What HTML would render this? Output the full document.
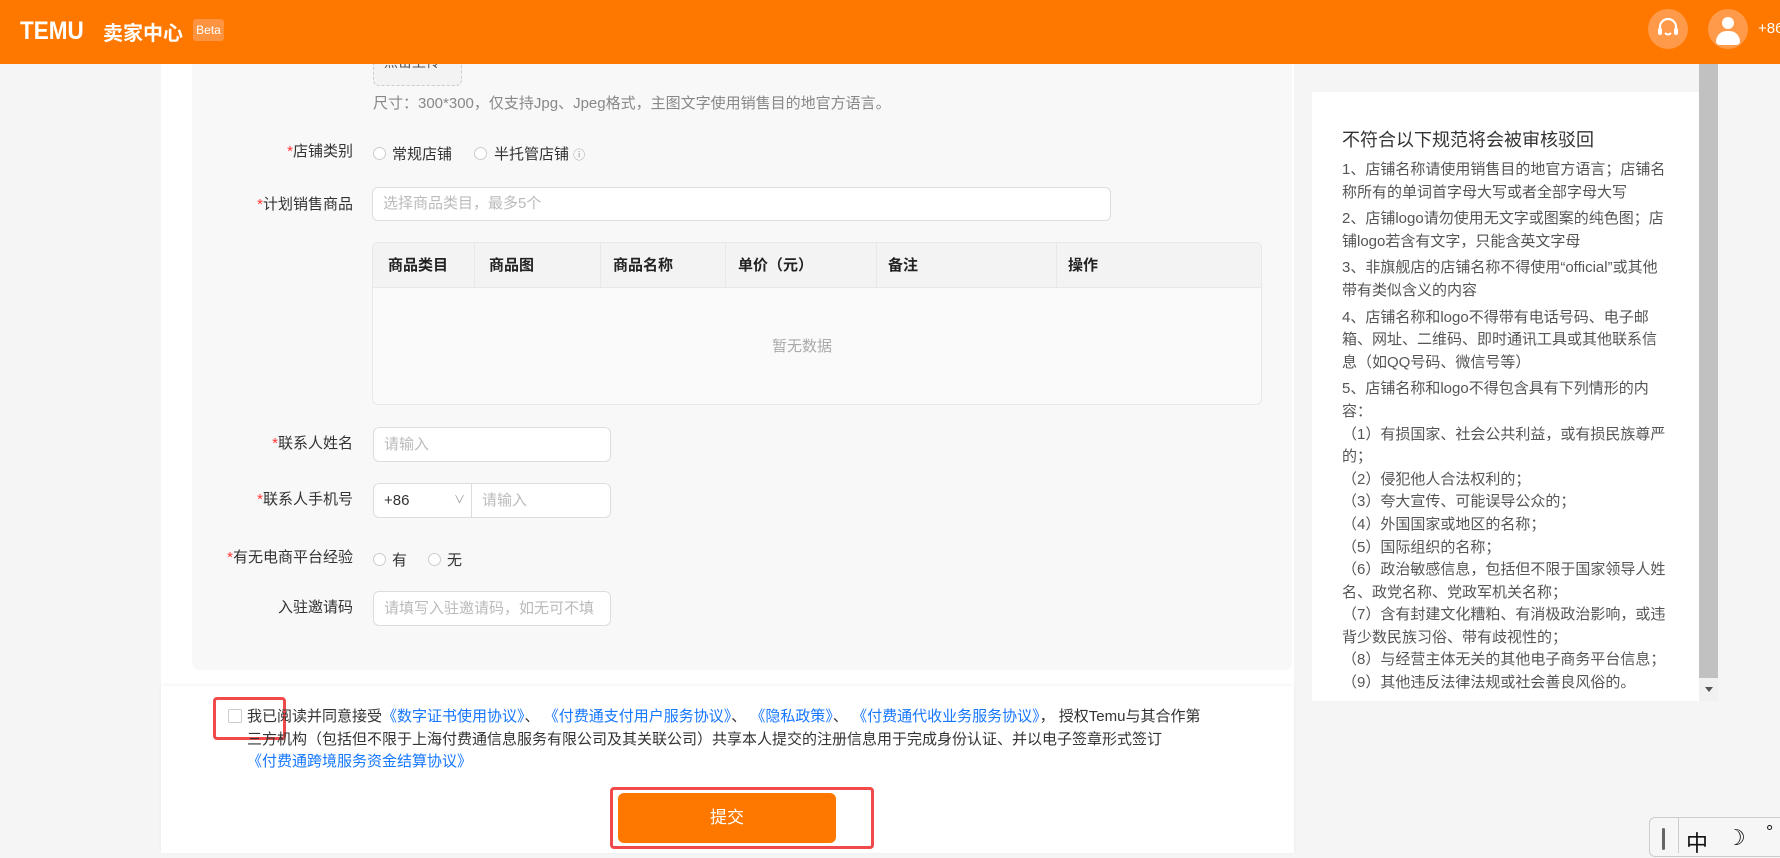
<!DOCTYPE html>
<html><head><meta charset="utf-8"><style>
*{margin:0;padding:0;box-sizing:border-box}
body{width:1780px;height:853px;overflow:hidden;background:#f5f5f5;font-family:"Liberation Sans","Noto Sans CJK SC",sans-serif;font-size:15px;color:#333;position:relative}
.a{position:absolute}
.hdr{left:0;top:0;width:1780px;height:64px;background:#fe7800}
.card{left:161px;top:64px;width:1133px;height:789px;background:#fff}
.form{left:192px;top:64px;width:1100px;height:606px;background:#f8f8f8;border-radius:0 0 8px 8px}
.lbl{width:200px;text-align:right;line-height:20px}
.lbl b{color:#f33;font-weight:normal}
.inp{background:#fff;border:1px solid #ddd;border-radius:6px;color:#bbb;padding-left:10px}
.rad{width:13px;height:13px;border:1px solid #ccc;border-radius:50%;background:#fff}
.th{top:254px;font-weight:bold;color:#222}
.rp{left:1312px;top:92px;width:389px;height:609px;background:#fff}
.rt{left:1342px;width:326px;font-size:15px;color:#555;line-height:22.6px}
.rt p{margin-bottom:4px}
.rt p.s{margin-bottom:0}
.lk{color:#1677ff}
</style></head><body>
<div class="a hdr"></div>
<div class="a" style="left:20px;top:17px;color:#fff;font-weight:bold;font-size:25px;transform:scaleX(.9);transform-origin:left">TEMU</div>
<div class="a" style="left:103px;top:17px;color:#fff;font-size:20px;font-weight:bold">卖家中心</div>
<div class="a" style="left:193px;top:19px;width:31px;height:22px;background:#ff9440;border-radius:3px;color:#fff;font-size:12px;line-height:22px;text-align:center">Beta</div>
<div class="a" style="left:1648px;top:9px;width:40px;height:40px;border-radius:50%;background:#ff9a4a"></div>
<svg class="a" style="left:1648px;top:9px" width="40" height="40" viewBox="0 0 40 40"><path d="M12 22v-4a8 8 0 0 1 16 0v4" fill="none" stroke="#fff" stroke-width="2.2"/><rect x="10" y="19" width="4" height="7" rx="2" fill="#fff"/><rect x="26" y="19" width="4" height="7" rx="2" fill="#fff"/><path d="M17 24q3 3 6 0" fill="none" stroke="#fff" stroke-width="2"/></svg>
<div class="a" style="left:1708px;top:9px;width:40px;height:40px;border-radius:50%;background:#ff9a4a;overflow:hidden"><div class="a" style="left:14px;top:8px;width:12px;height:12px;border-radius:50%;background:#fff"></div><div class="a" style="left:8px;top:22px;width:24px;height:14px;border-radius:12px 12px 4px 4px;background:#fff"></div></div>
<div class="a" style="left:1758px;top:20px;color:#fff;font-size:15px">+86</div>

<div class="a card"></div>
<div class="a form"></div>
<div class="a" style="left:373px;top:64px;width:89px;height:22px;border:1px dashed #ccc;border-top:none;border-radius:0 0 6px 6px;background:#f3f3f3;overflow:hidden"><div class="a" style="left:10px;top:-12px;font-size:14px;color:#555">点击上传</div></div>
<div class="a" style="left:373px;top:92px;font-size:15px;color:#888">尺寸：300*300，仅支持Jpg、Jpeg格式，主图文字使用销售目的地官方语言。</div>

<div class="a lbl" style="left:153px;top:142px"><b>*</b>店铺类别</div>
<div class="a rad" style="left:373px;top:147px"></div><div class="a" style="left:392px;top:143px">常规店铺</div>
<div class="a rad" style="left:474px;top:147px"></div><div class="a" style="left:494px;top:143px">半托管店铺 <span style="color:#999;font-size:12px">ⓘ</span></div>

<div class="a lbl" style="left:153px;top:195px"><b>*</b>计划销售商品</div>
<div class="a inp" style="left:372px;top:187px;width:739px;height:34px;line-height:32px">选择商品类目，最多5个</div>

<div class="a" style="left:372px;top:242px;width:890px;height:163px;border:1px solid #e8e8e8;border-radius:6px;background:#fafafa;overflow:hidden">
<div class="a" style="left:0;top:0;width:890px;height:45px;background:#f3f3f3;border-bottom:1px solid #e8e8e8"></div>
<div class="a" style="left:101px;top:0;width:1px;height:45px;background:#e8e8e8"></div>
<div class="a" style="left:227px;top:0;width:1px;height:45px;background:#e8e8e8"></div>
<div class="a" style="left:352px;top:0;width:1px;height:45px;background:#e8e8e8"></div>
<div class="a" style="left:503px;top:0;width:1px;height:45px;background:#e8e8e8"></div>
<div class="a" style="left:683px;top:0;width:1px;height:45px;background:#e8e8e8"></div>
</div>
<div class="a th" style="left:388px">商品类目</div><div class="a th" style="left:489px">商品图</div><div class="a th" style="left:613px">商品名称</div><div class="a th" style="left:738px">单价（元）</div><div class="a th" style="left:888px">备注</div><div class="a th" style="left:1068px">操作</div>
<div class="a" style="left:772px;top:335px;color:#aaa">暂无数据</div>

<div class="a lbl" style="left:153px;top:434px"><b>*</b>联系人姓名</div>
<div class="a inp" style="left:373px;top:427px;width:238px;height:35px;line-height:33px">请输入</div>
<div class="a lbl" style="left:153px;top:490px"><b>*</b>联系人手机号</div>
<div class="a inp" style="left:373px;top:483px;width:238px;height:35px;line-height:33px"><span style="color:#333">+86</span><span style="position:absolute;left:80px;color:#999;font-size:11px">∨</span><span style="position:absolute;left:97px;top:0;width:1px;height:33px;background:#ddd"></span><span style="position:absolute;left:108px">请输入</span></div>
<div class="a lbl" style="left:153px;top:548px"><b>*</b>有无电商平台经验</div>
<div class="a rad" style="left:373px;top:553px"></div><div class="a" style="left:392px;top:549px">有</div>
<div class="a rad" style="left:428px;top:553px"></div><div class="a" style="left:447px;top:549px">无</div>
<div class="a lbl" style="left:153px;top:598px">入驻邀请码</div>
<div class="a inp" style="left:373px;top:591px;width:238px;height:35px;line-height:33px">请填写入驻邀请码，如无可不填</div>

<div class="a" style="left:161px;top:686px;width:1133px;height:167px;background:#fff;box-shadow:0 -1px 4px rgba(0,0,0,.06)"></div>
<div class="a" style="left:228px;top:709px;width:14px;height:14px;border:1px solid #ccc;border-radius:2px"></div>
<div class="a" style="left:213px;top:697px;width:73px;height:43px;border:3px solid #f04a4a;border-radius:4px"></div>
<div class="a" style="left:247px;top:706px;white-space:nowrap;line-height:22.7px;font-size:15px;color:#333">我已阅读并同意接受<span class="lk">《数字证书使用协议》</span>、 <span class="lk">《付费通支付用户服务协议》</span>、 <span class="lk">《隐私政策》</span>、 <span class="lk">《付费通代收业务服务协议》</span>， 授权Temu与其合作第<br>三方机构（包括但不限于上海付费通信息服务有限公司及其关联公司）共享本人提交的注册信息用于完成身份认证、并以电子签章形式签订<br><span class="lk">《付费通跨境服务资金结算协议》</span></div>
<div class="a" style="left:618px;top:793px;width:218px;height:50px;background:#fe7800;border-radius:6px;color:#fff;font-size:17px;text-align:center;line-height:50px">提交</div>
<div class="a" style="left:610px;top:787px;width:264px;height:62px;border:3px solid #f04a4a;border-radius:4px"></div>

<div class="a rp"></div>
<div class="a" style="left:1342px;top:126px;font-size:18px;color:#333">不符合以下规范将会被审核驳回</div>
<div class="a rt" style="top:159px">
<p>1、店铺名称请使用销售目的地官方语言；店铺名称所有的单词首字母大写或者全部字母大写</p>
<p>2、店铺logo请勿使用无文字或图案的纯色图；店铺logo若含有文字，只能含英文字母</p>
<p>3、非旗舰店的店铺名称不得使用“official”或其他带有类似含义的内容</p>
<p>4、店铺名称和logo不得带有电话号码、电子邮箱、网址、二维码、即时通讯工具或其他联系信息（如QQ号码、微信号等）</p>
<p class="s">5、店铺名称和logo不得包含具有下列情形的内容：</p>
<p class="s">（1）有损国家、社会公共利益，或有损民族尊严的；</p>
<p class="s">（2）侵犯他人合法权利的；</p>
<p class="s">（3）夸大宣传、可能误导公众的；</p>
<p class="s">（4）外国国家或地区的名称；</p>
<p class="s">（5）国际组织的名称；</p>
<p class="s">（6）政治敏感信息，包括但不限于国家领导人姓名、政党名称、党政军机关名称；</p>
<p class="s">（7）含有封建文化糟粕、有消极政治影响，或违背少数民族习俗、带有歧视性的；</p>
<p class="s">（8）与经营主体无关的其他电子商务平台信息；</p>
<p class="s">（9）其他违反法律法规或社会善良风俗的。</p>
</div>
<div class="a" style="left:1699px;top:64px;width:19px;height:637px;background:#f1f1f1"></div>
<div class="a" style="left:1699px;top:64px;width:19px;height:614px;background:#c1c1c1"></div>
<div class="a" style="left:1705px;top:687px;width:0;height:0;border-left:4px solid transparent;border-right:4px solid transparent;border-top:5px solid #555"></div>

<div class="a" style="left:1649px;top:817px;width:140px;height:40px;background:#f6f6f6;border:1px solid #ccc;border-radius:6px"></div>
<div class="a" style="left:1662px;top:828px;width:3px;height:22px;background:#666;border-radius:2px"></div>
<div class="a" style="left:1678px;top:818px;width:1px;height:35px;background:#ccc"></div>
<div class="a" style="left:1686px;top:826px;font-size:22px;color:#111">中</div>
<div class="a" style="left:1726px;top:825px;font-size:22px;color:#111">☽</div>
<div class="a" style="left:1766px;top:822px;font-size:18px;color:#111">°</div>
</body></html>
